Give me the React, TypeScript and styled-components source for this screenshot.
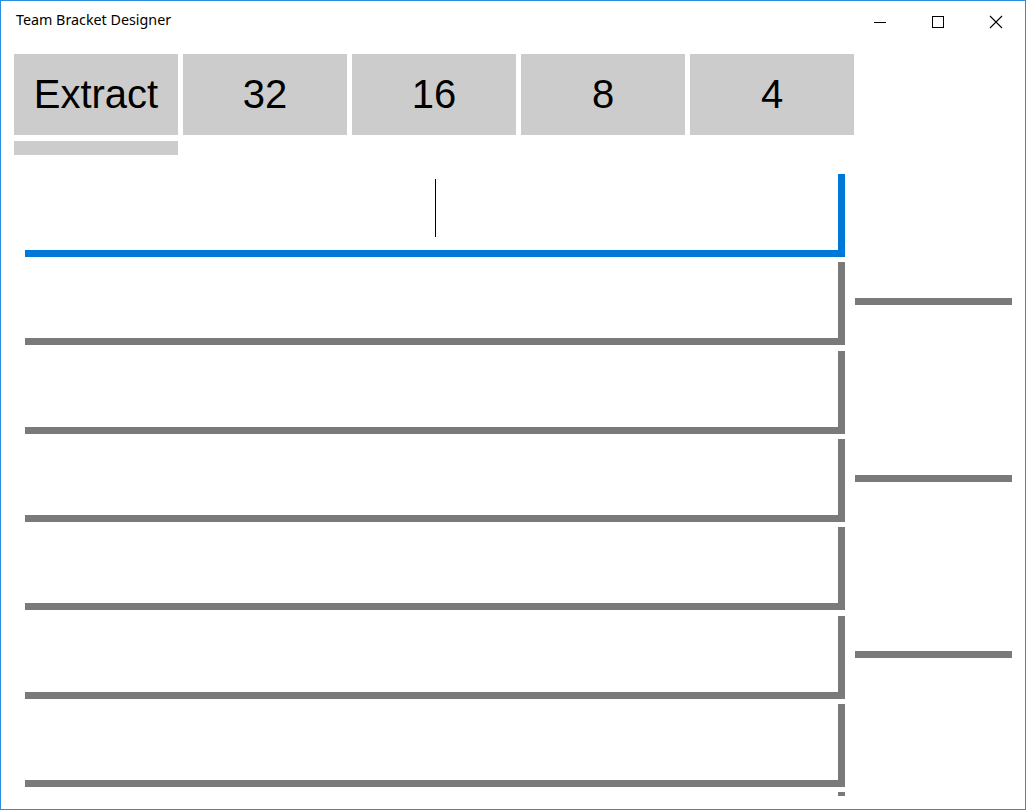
import styled, { createGlobalStyle } from "styled-components";

const GlobalStyle = createGlobalStyle`
  html, body {
    margin: 0;
    padding: 0;
    background: #ffffff;
  }
  * {
    box-sizing: border-box;
  }
`;

const seeds = ["32", "16", "8", "4"];
const firstRound = [0, 1, 2, 3, 4, 5, 6, 7];
const secondRound = [0, 1, 2];

function CaptionIcon(props: { kind: "min" | "max" | "close" }) {
  return (
    <svg width="14" height="14" viewBox="0 0 14 14">
      {props.kind === "min" && (
        <line x1="1" y1="7.5" x2="13" y2="7.5" stroke="#000" strokeWidth="1" />
      )}
      {props.kind === "max" && (
        <rect x="1.5" y="1.5" width="11" height="11" fill="none" stroke="#000" strokeWidth="1" />
      )}
      {props.kind === "close" && (
        <path d="M1 1 L13 13 M13 1 L1 13" stroke="#000" strokeWidth="1.1" fill="none" />
      )}
    </svg>
  );
}

function App() {
  return (
    <>
      <GlobalStyle />
      <StyledWindow>
        <TitleBar>
          <Title>Team Bracket Designer</Title>
          <Captions>
            <CaptionButton><CaptionIcon kind="min" /></CaptionButton>
            <CaptionButton><CaptionIcon kind="max" /></CaptionButton>
            <CaptionButton><CaptionIcon kind="close" /></CaptionButton>
          </Captions>
        </TitleBar>
        <Content>
          <ButtonRow>
            <SizeButton>Extract</SizeButton>
            {seeds.map((s) => (
              <SizeButton key={s}>{s}</SizeButton>
            ))}
          </ButtonRow>
          <Progress />
          <Bracket>
            <RoundColumn>
              {firstRound.map((i) => (
                <TeamBox key={i} $focused={i === 0}>
                  {i === 0 && <Caret />}
                </TeamBox>
              ))}
            </RoundColumn>
            <NextRoundColumn>
              {secondRound.map((i) => (
                <WinnerBox key={i} />
              ))}
            </NextRoundColumn>
          </Bracket>
        </Content>
      </StyledWindow>
    </>
  );
}

export default App;

const StyledWindow = styled.div`
  width: 1026px;
  height: 810px;
  border: 1px solid #2b8ee0;
  background: #ffffff;
  overflow: hidden;
  display: flex;
  flex-direction: column;
`;

const TitleBar = styled.div`
  height: 32px;
  display: flex;
  align-items: flex-start;
  justify-content: space-between;
`;

const Title = styled.div`
  font-family: "Noto Sans", "Open Sans", sans-serif;
  font-size: 14.3px;
  color: #000;
  padding: 9px 0 0 15px;
  line-height: 20px;
`;

const Captions = styled.div`
  display: flex;
  height: 40px;
`;

const CaptionButton = styled.div`
  width: 58px;
  height: 40px;
  display: flex;
  justify-content: center;
  padding-top: 14px;
`;

const Content = styled.div`
  padding: 21px 0 0 13px;
  display: flex;
  flex-direction: column;
`;

const ButtonRow = styled.div`
  display: flex;
  gap: 5px;
`;

const SizeButton = styled.div`
  width: 164px;
  height: 81px;
  background: #cccccc;
  display: flex;
  align-items: center;
  justify-content: center;
  font-family: "Liberation Sans", Arial, sans-serif;
  font-size: 40px;
  color: #000;
`;

const Progress = styled.div`
  width: 164px;
  height: 14px;
  margin-top: 6px;
  background: #cccccc;
`;

const Bracket = styled.div`
  margin: 19px 0 0 11px;
  height: 622px;
  overflow: hidden;
  display: flex;
  gap: 10px;
`;

const RoundColumn = styled.div`
  width: 820px;
  display: flex;
  flex-direction: column;
  gap: 5.33px;
  flex-shrink: 0;
`;

const TeamBox = styled.div<{ $focused?: boolean }>`
  height: 83px;
  flex-shrink: 0;
  border-right: 7px solid ${(p) => (p.$focused ? "#0078d7" : "#7a7a7a")};
  border-bottom: 7px solid ${(p) => (p.$focused ? "#0078d7" : "#7a7a7a")};
  display: flex;
  justify-content: center;
  padding: 5px 0 0 7px;
`;

const Caret = styled.div`
  width: 1px;
  height: 58px;
  background: #000;
`;

const NextRoundColumn = styled.div`
  width: 157px;
  display: flex;
  flex-direction: column;
  padding-top: 48px;
  gap: 93.67px;
  flex-shrink: 0;
`;

const WinnerBox = styled.div`
  height: 83px;
  flex-shrink: 0;
  border-bottom: 7px solid #7a7a7a;
`;
